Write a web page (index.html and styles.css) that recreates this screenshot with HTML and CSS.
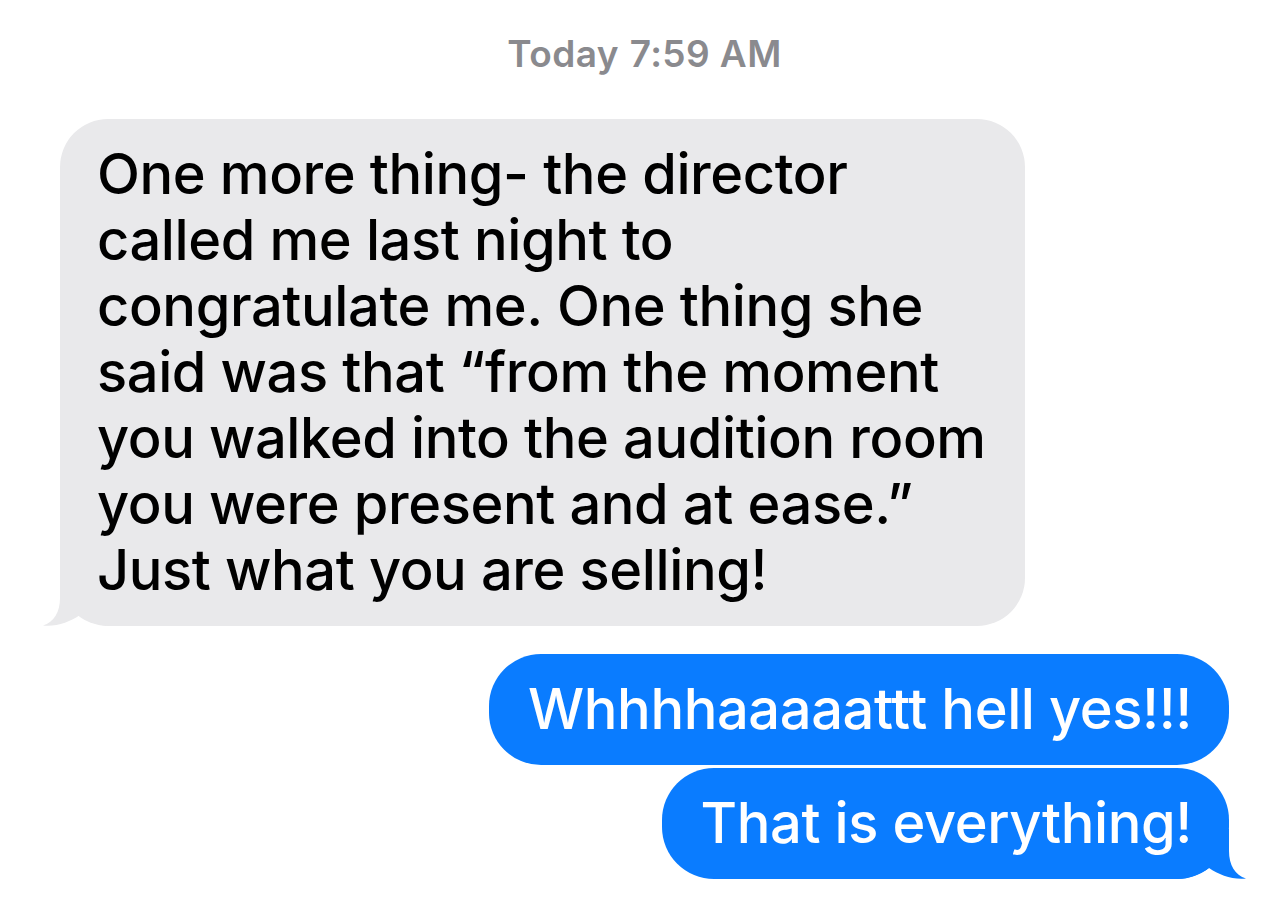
FILE: index.html
```html
<!DOCTYPE html>
<html lang="en">
<head>
<meta charset="utf-8">
<title>Messages</title>
<link rel="stylesheet" href="styles.css">
</head>
<body>
<main class="thread">
  <div class="timestamp"><span class="day">Today</span> <span class="time">7:59 AM</span></div>

  <div class="bubble received">
    <p class="text">One more thing- the director<br>called me last night to<br>congratulate me. One thing she<br>said was that “from the moment<br>you walked into the audition room<br>you were present and at ease.”<br>Just what you are selling!</p>
    <svg class="tail tail-left" width="70" height="50" viewBox="0 0 70 50" aria-hidden="true"><path d="M18,0 L18,22 C18,36 12,46 1,49.5 C14,51 28,46 38,39 C46,45 58,50 70,50 L70,0 Z"/></svg>
  </div>

  <div class="bubble sent first">
    <p class="text">Whhhhaaaaattt hell yes!!!</p>
  </div>
  <div class="bubble sent last">
    <p class="text">That is everything!</p>
    <svg class="tail tail-right" width="70" height="50" viewBox="0 0 70 50" aria-hidden="true"><path d="M52,0 L52,22 C52,36 58,46 69,49.5 C56,51 42,46 32,39 C24,45 12,50 0,50 L0,0 Z"/></svg>
  </div>
</main>
</body>
</html>
```

FILE: styles.css
```css
html, body {
  margin: 0;
  padding: 0;
  background: #ffffff;
}

body {
  font-family: Inter, "Noto Sans", "Liberation Sans", sans-serif;
  -webkit-font-smoothing: antialiased;
}

.thread {
  display: flex;
  flex-direction: column;
  padding: 31px 47px 0 60px;
}

.timestamp {
  align-self: center;
  font-size: 37px;
  line-height: 45px;
  color: #8a8a8e;
  letter-spacing: 0.4px;
}

.timestamp .day {
  font-weight: 600;
}

.timestamp .time {
  font-weight: 600;
}

.bubble {
  position: relative;
  box-sizing: border-box;
}

.bubble .text {
  position: relative;
  z-index: 1;
  margin: 0;
  font-size: 56px;
  font-weight: 500;
  line-height: 66px;
  letter-spacing: -0.4px;
  white-space: nowrap;
}

.tail {
  position: absolute;
  bottom: 0;
  z-index: 0;
}

.received {
  align-self: flex-start;
  width: 965px;
  margin-top: 43px;
  padding: 22px 37px 23px;
  background: #e9e9eb;
  border-radius: 48px;
  color: #000000;
}

.received .tail {
  left: -18px;
  fill: #e9e9eb;
}

.sent {
  align-self: flex-end;
  padding: 22px 37px 23px 39px;
  background: #0a7cff;
  border-radius: 52px;
  color: #ffffff;
}

.sent.first {
  margin-top: 28px;
}

.sent.last {
  margin-top: 3px;
}

.sent .tail {
  right: -18px;
  fill: #0a7cff;
}
```
